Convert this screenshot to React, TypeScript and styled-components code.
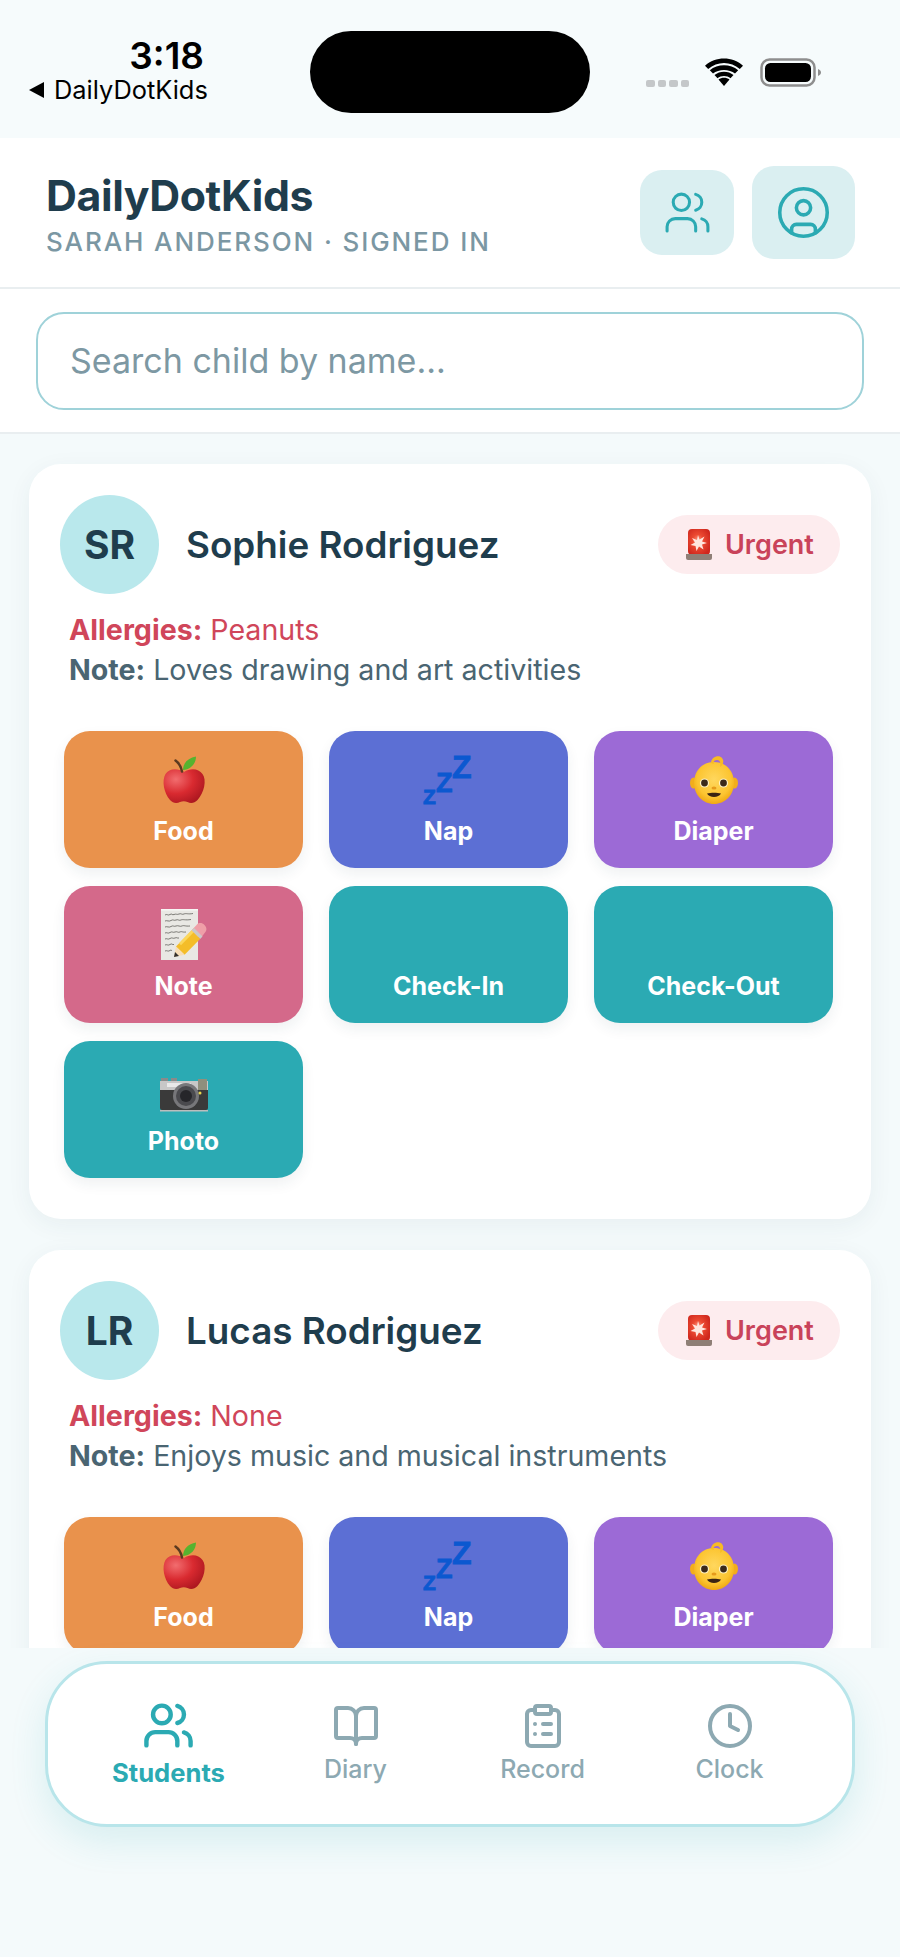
import React from "react";
import styled, { createGlobalStyle } from "styled-components";
import { BookOpen, CircleUser, ClipboardList, Clock, Users } from "lucide-react";

const Global = createGlobalStyle`
  html, body { margin: 0; padding: 0; background: #f4fafb; }
  * { box-sizing: border-box; }
  body { font-family: Inter, "Liberation Sans", sans-serif; }
`;

const Page = styled.div`
  width: 900px;
  height: 1957px;
  display: flex;
  flex-direction: column;
  background: #f4fafb;
  overflow: hidden;
`;

const StatusBar = styled.div`
  height: 138px;
  flex: none;
  display: grid;
  grid-template-columns: 310px 280px 1fr;
  background: #f6fbfc;
`;

const StatusLeft = styled.div`
  padding: 35px 0 0 29px;
  color: #000;
`;

const Time = styled.div`
  width: 175px;
  text-align: right;
  font-size: 37px;
  line-height: 41px;
  font-weight: 600;
`;

const BackLink = styled.div`
  display: flex;
  align-items: center;
  gap: 10px;
  margin-top: -1px;
  font-size: 25.4px;
  line-height: 30px;
  font-weight: 400;
`;

const BackArrow = styled.span`
  width: 0;
  height: 0;
  border-top: 8px solid transparent;
  border-bottom: 8px solid transparent;
  border-right: 15px solid #000;
`;

const Island = styled.div`
  margin-top: 31px;
  height: 82px;
  border-radius: 41px;
  background: #000;
`;

const StatusRight = styled.div`
  display: flex;
  align-items: flex-start;
  padding: 58px 0 0 56px;
`;

const SignalDots = styled.div`
  display: flex;
  gap: 3px;
  margin: 22px 16px 0 0;
`;

const SignalDot = styled.span`
  width: 8.5px;
  height: 7px;
  border-radius: 2px;
  background: #c4c7c9;
`;

const Header = styled.header`
  height: 151px;
  flex: none;
  display: flex;
  align-items: center;
  justify-content: space-between;
  padding: 0 45px 0 46px;
  background: #fff;
  border-bottom: 2px solid #e9eef0;
`;

const TitleBlock = styled.div`
  margin-top: 4px;
`;

const Title = styled.h1`
  margin: 0;
  color: #1f3d4d;
  font-size: 42.8px;
  line-height: 50px;
  font-weight: 700;
  letter-spacing: -0.4px;
`;

const Subtitle = styled.div`
  margin-top: 5px;
  color: #7b97a3;
  font-size: 26px;
  line-height: 32px;
  font-weight: 500;
  letter-spacing: 1.9px;
`;

const HeaderActions = styled.div`
  display: flex;
  align-items: center;
  gap: 18px;
`;

const IconButton = styled.button<{ $w: number; $h: number }>`
  width: ${(p) => p.$w}px;
  height: ${(p) => p.$h}px;
  display: flex;
  align-items: center;
  justify-content: center;
  padding: 0;
  border: 0;
  border-radius: 22px;
  background: #daeff1;
  color: #2baab3;
`;

const SearchBar = styled.div`
  height: 145px;
  flex: none;
  padding: 23px 36px 0;
  background: #fff;
  border-bottom: 2px solid #e9eef0;
`;

const SearchField = styled.div`
  height: 98px;
  display: flex;
  align-items: center;
  padding: 0 32px 2px;
  border: 2px solid #9fd2d9;
  border-radius: 28px;
  background: #fff;
  color: #7d98a3;
  font-size: 34px;
`;

const Content = styled.main`
  flex: 1;
  min-height: 0;
  overflow: hidden;
  display: flex;
  flex-direction: column;
  gap: 31px;
  padding: 30px 29px 0;
`;

const Card = styled.section`
  flex: none;
  height: 755px;
  padding: 31px 31px 0;
  border-radius: 32px;
  background: #fff;
  box-shadow: 0 6px 24px rgba(31, 61, 77, 0.06);
`;

const CardHead = styled.div`
  display: flex;
  align-items: center;
  height: 98px;
`;

const Avatar = styled.div`
  width: 99px;
  height: 99px;
  flex: none;
  display: flex;
  align-items: center;
  justify-content: center;
  border-radius: 50%;
  background: #b9e8ec;
  color: #1f3d4d;
  font-size: 39px;
  font-weight: 700;
`;

const ChildName = styled.div`
  flex: 1;
  margin-left: 27px;
  color: #1f3d4d;
  font-size: 36.8px;
  font-weight: 600;
`;

const UrgentBadge = styled.div`
  width: 182px;
  height: 59px;
  display: flex;
  align-items: center;
  gap: 13px;
  padding-left: 28px;
  border-radius: 30px;
  background: #fdecee;
  color: #c9435a;
  font-size: 27px;
  font-weight: 600;
`;

const Details = styled.div`
  padding: 17px 0 0 9px;
  font-size: 28.6px;
  line-height: 40px;
`;

const AllergyLine = styled.div`
  color: #d0465a;
  strong { font-weight: 700; }
`;

const NoteLine = styled.div`
  color: #4a6572;
  strong { font-weight: 700; }
`;

const ActionGrid = styled.div`
  display: grid;
  grid-template-columns: repeat(3, 239px);
  grid-auto-rows: 137px;
  column-gap: 26px;
  row-gap: 18px;
  margin: 41px 0 0 4px;
`;

const ActionButton = styled.button<{ $bg: string }>`
  display: flex;
  flex-direction: column;
  align-items: center;
  padding: 24px 0 0;
  border: 0;
  border-radius: 26px;
  background: ${(p) => p.$bg};
  box-shadow: 0 6px 14px rgba(31, 61, 77, 0.07);
  color: #fff;
  font-family: inherit;
`;

const ActionIcon = styled.div`
  height: 50px;
  display: flex;
  align-items: center;
  justify-content: center;
`;

const ActionLabel = styled.span`
  margin-top: 11px;
  font-size: 25px;
  line-height: 30px;
  font-weight: 700;
`;

const BottomArea = styled.div`
  height: 309px;
  flex: none;
  padding: 13px 45px 0;
  background: #f4fafb;
  position: relative;
`;

const Nav = styled.nav`
  height: 166px;
  display: grid;
  grid-template-columns: repeat(4, 1fr);
  padding: 0 29px 0 27px;
  border: 3px solid #b8e5ea;
  border-radius: 62px;
  background: #fff;
  box-shadow: 0 14px 36px rgba(43, 170, 179, 0.14);
`;

const NavItem = styled.div<{ $active?: boolean }>`
  display: flex;
  flex-direction: column;
  align-items: center;
  padding-top: ${(p) => (p.$active ? 35 : 38)}px;
  color: ${(p) => (p.$active ? "#2baab3" : "#8da9b2")};
`;

const NavLabel = styled.span<{ $active?: boolean }>`
  margin-top: ${(p) => (p.$active ? 6 : 4)}px;
  font-size: ${(p) => (p.$active ? 25.6 : 25)}px;
  line-height: 30px;
  font-weight: ${(p) => (p.$active ? 700 : 500)};
`;

const AppleIcon = () => (
  <svg width="46" height="50" viewBox="0 0 46 50">
    <defs>
      <radialGradient id="appleBody" cx="0.3" cy="0.3" r="0.85">
        <stop offset="0" stopColor="#f26d6f" />
        <stop offset="0.5" stopColor="#d92a30" />
        <stop offset="1" stopColor="#a5141d" />
      </radialGradient>
    </defs>
    <path d="M23 17C17 13 8 13 4.500 19 0.500 26 3 38 9 45c3 3.500 7 3.500 10 2 2.500-1 5-1 7.500 0 3 1.500 7 1.300 10-2C43 38 46 25 41.500 19 37.500 13 29 13 23 17Z" fill="url(#appleBody)" />
    <path d="M21 16.500C20 11 18 8 14.500 5.500" fill="none" stroke="#5b3a20" strokeWidth="2.500" strokeLinecap="round" />
    <path d="M22 15C22 8 27 3 35 1.500 35 8.500 30 14.500 22 15Z" fill="#56b32f" />
  </svg>
);

const ZzzIcon = () => (
  <svg width="52" height="66" viewBox="0 -8 52 66" fontFamily="'Liberation Sans', sans-serif" fontWeight="700" fill="#0b58d0" stroke="#0b58d0" strokeWidth="0.800">
    <text x="0" y="49" fontSize="21">Z</text>
    <text x="13" y="37" fontSize="27">Z</text>
    <text x="29" y="23" fontSize="32">Z</text>
  </svg>
);

const BabyIcon = () => (
  <svg width="50" height="50" viewBox="0 0 50 50">
    <defs>
      <radialGradient id="babyFace" cx="0.5" cy="0.42" r="0.6">
        <stop offset="0" stopColor="#ffd75e" />
        <stop offset="0.7" stopColor="#fcc531" />
        <stop offset="1" stopColor="#eea50f" />
      </radialGradient>
    </defs>
    <ellipse cx="4.500" cy="28" rx="3.500" ry="5.500" fill="#f2ad1c" />
    <ellipse cx="45.500" cy="28" rx="3.500" ry="5.500" fill="#f2ad1c" />
    <path d="M25 7C38 7 45 17 45 28 45 40 36 49 25 49 14 49 5 40 5 28 5 17 12 7 25 7Z" fill="url(#babyFace)" />
    <path d="M22 8C22 2 30 -1 33 3 36 7 33 11 31 12 32 8 31 5 28 5 25 5 24 7 25 9Z" fill="#f8bb24" />
    <circle cx="15.500" cy="28" r="4.600" fill="#fff3c4" />
    <circle cx="34.500" cy="28" r="4.600" fill="#fff3c4" />
    <circle cx="15.500" cy="28" r="3.400" fill="#3b2a1a" />
    <circle cx="34.500" cy="28" r="3.400" fill="#3b2a1a" />
    <ellipse cx="25" cy="33" rx="2.500" ry="1.500" fill="#e69a1a" />
    <path d="M18 38.500C22 37.500 28 37.500 32 38.500 30 43 20 43 18 38.500Z" fill="#3a2413" />
  </svg>
);

const MemoIcon = () => (
  <svg width="46" height="52" viewBox="0 0 46 52">
    <rect x="0" y="0" width="37" height="51" fill="#e9e8e4" />
    <rect x="0" y="0" width="37" height="1.500" fill="#f7f7f5" />
    <g fill="none" stroke="#4e4c48" strokeWidth="0.700">
      <path d="M4 6c2-1.500 3 1 5-.5s2 1 4 0 3 .5 5-.5 3 1 5 0 4 .5 9-.5" />
      <path d="M4 12c2-1 4 1 6-.5s3 .5 5-.5 3 1 5 0 4 .5 10-.5" />
      <path d="M4 18c2-1 4 1 6-.5s3 .5 5-.5 4 1 6 0 3 .5 8 0" />
      <path d="M4 24c2-1 3 1 5-.5s3 .5 5-.5 3 1 5 0 2 .5 6 0" />
      <path d="M4 30c2-1 3 1 5-.5s3 .5 5-.5 2 .5 4 0" />
      <path d="M4 36c2-1 3 1 5-.5s2 .5 4 0" />
      <path d="M4 42c2-1 3 1 5-.5s1 .5 2 0" />
    </g>
    <path d="M15 37.400 30.700 21.300 39.300 29.700 23.600 45.800Z" fill="#f4bd29" />
    <path d="M18 34.300 33.500 18.500 35.500 20.500 20 36.300Z" fill="#fbd75c" />
    <path d="M15 37.400 13 48 23.600 45.800Z" fill="#f8deb6" />
    <path d="M14 43 13 48 18 47Z" fill="#33302c" />
    <path d="M30.700 21.300 36 15.500C38 13.500 41 13.500 43.500 16 46 18.500 46 21.500 44 23.500L39.300 29.700Z" fill="#ef9fa8" />
    <path d="M30.700 21.300 33 19 41.500 27.400 39.300 29.700Z" fill="#c9c9c9" />
  </svg>
);

const CameraIcon = () => (
  <svg width="50" height="50" viewBox="0 0 50 50">
    <rect x="2" y="13" width="7" height="5" fill="#8a8a8a" />
    <rect x="12" y="13" width="6" height="5" fill="#8a8a8a" />
    <rect x="1" y="16" width="48" height="29" rx="2" fill="#3a3a3a" />
    <rect x="1" y="16" width="48" height="9" fill="#c7c7c7" />
    <rect x="8" y="18" width="24" height="4" fill="#e9e9e9" />
    <rect x="39" y="14" width="9" height="11" fill="#8f8f7c" />
    <rect x="1" y="45" width="48" height="1.500" fill="#bdbdbd" />
    <circle cx="27" cy="31" r="13" fill="#77777a" />
    <circle cx="27" cy="31" r="10" fill="#4a4a4e" />
    <circle cx="27" cy="31" r="6" fill="#26262a" />
    <circle cx="41" cy="28" r="1.500" fill="#e7d64a" />
  </svg>
);

const SirenIcon = () => (
  <svg width="26" height="31" viewBox="0 0 26 31">
    <defs>
      <radialGradient id="sirenGlow" cx="0.45" cy="0.45" r="0.6">
        <stop offset="0" stopColor="#ff9d85" />
        <stop offset="0.4" stopColor="#ec4a32" />
        <stop offset="1" stopColor="#cf271d" />
      </radialGradient>
    </defs>
    <rect x="2" y="0" width="22" height="26" rx="4" fill="url(#sirenGlow)" />
    <path d="M12 6l1.500 4.500 5-3-2.500 5 5 1.500-5 1.500 1.500 5-4.500-3-2.500 4.500-1-5-5-1 4.500-2.500-3-4.500 5 2Z" fill="#ffe6de" />
    <path d="M0 25h26v4a2 2 0 0 1-2 2H2a2 2 0 0 1-2-2Z" fill="#8f7f76" />
  </svg>
);

const actions = [
  { label: "Food", bg: "#e9924c", icon: <AppleIcon /> },
  { label: "Nap", bg: "#5c6fd4", icon: <ZzzIcon /> },
  { label: "Diaper", bg: "#9c6ad6", icon: <BabyIcon /> },
  { label: "Note", bg: "#d4698a", icon: <MemoIcon /> },
  { label: "Check-In", bg: "#2baab3", icon: null },
  { label: "Check-Out", bg: "#2baab3", icon: null },
  { label: "Photo", bg: "#2baab3", icon: <CameraIcon /> },
];

const children = [
  { initials: "SR", name: "Sophie Rodriguez", allergies: "Peanuts", note: "Loves drawing and art activities", visibleActions: 7 },
  { initials: "LR", name: "Lucas Rodriguez", allergies: "None", note: "Enjoys music and musical instruments", visibleActions: 3 },
];

const navItems = [
  { label: "Students", Icon: Users, active: true },
  { label: "Diary", Icon: BookOpen },
  { label: "Record", Icon: ClipboardList },
  { label: "Clock", Icon: Clock },
];

export default function App() {
  return (
    <Page>
      <Global />
      <StatusBar>
        <StatusLeft>
          <Time>3:18</Time>
          <BackLink>
            <BackArrow />
            DailyDotKids
          </BackLink>
        </StatusLeft>
        <Island />
        <StatusRight>
          <SignalDots>
            <SignalDot />
            <SignalDot />
            <SignalDot />
            <SignalDot />
          </SignalDots>
          <svg width="38" height="28" viewBox="0 0 38 28">
            <path d="M19 28 13.500 21.500C16.500 19 21.500 19 24.500 21.500Z" />
            <path d="M9.500 17C14.500 12.500 23.500 12.500 28.500 17L25.500 20.300C22 17.300 16 17.300 12.500 20.300Z" />
            <path d="M4.800 12.300C12.500 5.500 25.500 5.500 33.200 12.300L30 15.600C24.200 10.800 13.800 10.800 8 15.600Z" />
            <path d="M0 7.700C10.500 -2 27.500 -2 38 7.700L34.800 11C25.800 3 12.200 3 3.200 11Z" />
          </svg>
          <svg width="62" height="29" viewBox="0 0 62 29" style={{ marginLeft: 17 }}>
            <rect x="1.500" y="1.500" width="53" height="26" rx="8" fill="none" stroke="#8e8e8e" strokeWidth="2.500" />
            <rect x="5" y="5" width="46" height="19" rx="5.500" fill="#000" />
            <path d="M58 11c2 .8 3 2 3 3.500S60 17.200 58 18Z" fill="#8e8e8e" />
          </svg>
        </StatusRight>
      </StatusBar>

      <Header>
        <TitleBlock>
          <Title>DailyDotKids</Title>
          <Subtitle>SARAH ANDERSON · SIGNED IN</Subtitle>
        </TitleBlock>
        <HeaderActions>
          <IconButton $w={94} $h={85}>
            <Users size={49} strokeWidth={1.5} />
          </IconButton>
          <IconButton $w={103} $h={93}>
            <CircleUser size={57} strokeWidth={1.5} />
          </IconButton>
        </HeaderActions>
      </Header>

      <SearchBar>
        <SearchField>Search child by name...</SearchField>
      </SearchBar>

      <Content>
        {children.map((child) => (
          <Card key={child.initials}>
            <CardHead>
              <Avatar>{child.initials}</Avatar>
              <ChildName>{child.name}</ChildName>
              <UrgentBadge>
                <SirenIcon />
                Urgent
              </UrgentBadge>
            </CardHead>
            <Details>
              <AllergyLine>
                <strong>Allergies:</strong> {child.allergies}
              </AllergyLine>
              <NoteLine>
                <strong>Note:</strong> {child.note}
              </NoteLine>
            </Details>
            <ActionGrid>
              {actions.slice(0, child.visibleActions).map((action) => (
                <ActionButton key={action.label} $bg={action.bg}>
                  <ActionIcon>{action.icon}</ActionIcon>
                  <ActionLabel>{action.label}</ActionLabel>
                </ActionButton>
              ))}
            </ActionGrid>
          </Card>
        ))}
      </Content>

      <BottomArea>
        <Nav>
          {navItems.map(({ label, Icon, active }) => (
            <NavItem key={label} $active={active}>
              <Icon size={active ? 53 : 48} strokeWidth={2} />
              <NavLabel $active={active}>{label}</NavLabel>
            </NavItem>
          ))}
        </Nav>
      </BottomArea>
    </Page>
  );
}
